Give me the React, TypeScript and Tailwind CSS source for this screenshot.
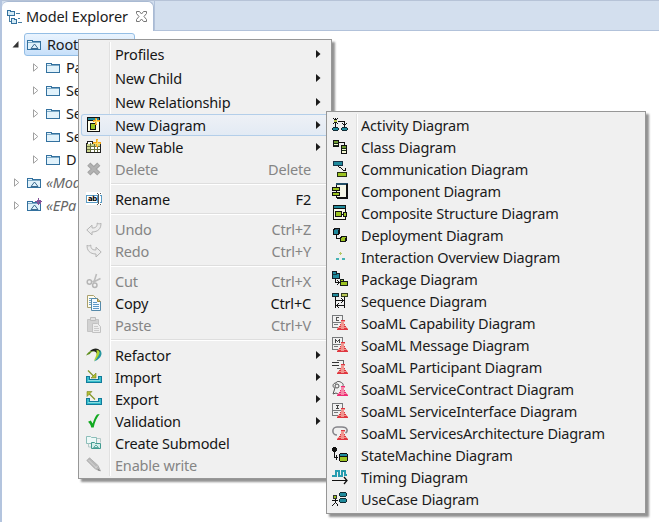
import type { ReactNode } from "react";

function Svg({ children, crisp = true, className = "" }: { children: ReactNode; crisp?: boolean; className?: string }) {
  return (
    <svg
      viewBox="0 0 16 16"
      width="16"
      height="16"
      fill="none"
      className={`block shrink-0 ${className}`}
      shapeRendering={crisp ? "crispEdges" : "auto"}
    >
      {children}
    </svg>
  );
}

const TEAL = "#1f8a9c";
const LIME = "#9cc321";

/* ---------- main menu icons ---------- */

const NewDiagramIcon = () => (
  <Svg>
    <path d="M1.5 .5h12v14h-12z" fill="#fffde8" stroke="#111" />
    <path d="M2 1h11v2H2z" fill={TEAL} />
    <path d="M2 3.500h11M13 3v12M2 14h12" stroke="#111" />
    <path d="M4.500 6.500h5v6h-5z" fill={LIME} stroke="#111" />
    <path d="M9 1h2v2h3v2h-3v3H9V5H7V3h2z" fill="#f09a1c" />
    <path d="M10 2v5M8 4h5" stroke="#ffdc5a" />
  </Svg>
);

const NewTableIcon = () => (
  <Svg>
    <path d="M.5 4.500h1v-2h5v2h8v9H.5z" fill="#fff" stroke="#222" />
    <path d="M1 5h13v2H1zM1 7h3v6H1z" fill="#c9d389" />
    <path d="M1 7.500h13M1 10.500h13M4.500 4v9M8.500 4v9M11.500 7v6" stroke="#6a7040" />
    <path d="M10 0h2v3h3v2h-3v3h-2V5H7V3h3z" fill="#f2a51c" />
    <path d="M11 1v6M8 4h6" stroke="#ffdc5a" />
  </Svg>
);

const DeleteIcon = () => (
  <Svg crisp={false}>
    <path d="M2.800 3.200l10 9.600M12.800 3.200l-10 9.600" stroke="#a2a2a2" strokeWidth="4.600" />
    <path d="M3.200 3.600l9.200 8.800M12.400 3.600l-9.200 8.800" stroke="#b2b2b2" strokeWidth="2.600" />
  </Svg>
);

const RenameIcon = () => (
  <span className="relative block h-4 w-4 shrink-0">
    <Svg>
      <path d="M0 1h16v13H0z" fill="#fff" />
      <path d="M0.500 4.500h11v7h-11zM14 4.500h1.500v7H14" stroke="#5a9bc4" />
      <path d="M11 2.500h1M14 2.500h1M11 13.500h1M14 13.500h1M12.500 3v10" stroke="#555" />
    </Svg>
    <span className="absolute top-[4px] left-[2px] font-['DejaVu_Sans'] text-[7px] leading-[8px] font-bold tracking-[-0.5px] text-black">ab</span>
  </span>
);

const TurnIcon = ({ flip = false }: { flip?: boolean }) => (
  <Svg crisp={false} className={flip ? "-scale-x-100" : ""}>
    <path
      d="M.8 9L6 4.200v2.700c3 .4 5.500-1 5.200-4.900 1 1.200 3.500 1 3.700 0 .5 5.500-3 9-8.900 9v3z"
      fill="#ececec"
      stroke="#b4b4b4"
    />
  </Svg>
);

const CutIcon = () => (
  <Svg crisp={false}>
    <path d="M10.500 1L8.300 8l-2 .7M14.500 5.500L7 9.200" stroke="#bcbcbc" strokeWidth="1.600" />
    <circle cx="3.400" cy="9" r="2.200" stroke="#b5b5b5" strokeWidth="1.500" />
    <circle cx="8.800" cy="12.200" r="2.200" stroke="#b5b5b5" strokeWidth="1.500" />
  </Svg>
);

const CopyIcon = () => (
  <Svg crisp={false}>
    <path d="M1.500.5h6l2 2v10h-8z" fill="#fffdf0" stroke="#aaa06c" />
    <path d="M3 3.500h4M3 5.500h2M3 7.500h2M3 9.500h2" stroke="#6b9fc8" />
    <path d="M5.500 3.500h6l3 3v9h-9z" fill="#f3f9ff" stroke="#568aaa" />
    <path d="M11.500 3.500v3h3" fill="#e0c470" stroke="#9c8b47" />
    <path d="M7 7.500h4M7 9.500h6M7 11.500h6M7 13.500h6" stroke="#5c98c7" />
  </Svg>
);

const PasteIcon = () => (
  <Svg crisp={false}>
    <path d="M1.500 2.500h11v12h-11z" fill="#d2d2d2" stroke="#c4c4c4" />
    <path d="M4.500.5h5v3h-5z" fill="#e1e1e1" stroke="#bcbcbc" />
    <path d="M6.500 6.500h5l3 3v6h-8z" fill="#eee" stroke="#c2c2c2" />
    <path d="M8 9.500h4M8 11.500h5M8 13.500h5" stroke="#cacaca" />
  </Svg>
);

const RefactorIcon = () => (
  <Svg crisp={false}>
    <path d="M0 8.500C2 4.500 6 2.500 10 4c-3.500.1-5.200 1-6.200 3z" fill="#5f8f1f" />
    <path d="M4 4c3-3.500 9-3.500 10.500.5L11 8c0-3.500-2.500-4.500-7-4z" fill="#20231d" />
    <path d="M10.500 3c5 0 4.500 6-2.300 11 .3-3 3.300-5.400 2.300-11z" fill="#b0d52c" />
    <path d="M14 3c4 4.300-.6 9.800-6 11.500 3.600-3.600 5.800-7 6-11.500z" fill="#2596a1" />
  </Svg>
);

const ImportIcon = ({ exporting = false }: { exporting?: boolean }) => (
  <Svg>
    <path d="M.5 7.500h3v3h9v-3h3v6H.5z" fill="#35bdcb" stroke="#117b9b" />
    <path d="M2 11.500h12" stroke="#8bdce1" />
    <g shapeRendering="auto">
      <path d="M2 1.500l7 7" stroke="#83962a" strokeWidth="1.300" />
      {exporting ? (
        <path d="M1 .5h5l-5 5z" fill="#b3be31" stroke="#748523" strokeWidth=".6" />
      ) : (
        <path d="M10 4v5H5z" fill="#b3be31" stroke="#748523" strokeWidth=".6" />
      )}
    </g>
  </Svg>
);

const CheckIcon = () => (
  <Svg crisp={false}>
    <path d="M2 8.800l2.800-1.300 1.900 3C8 6.500 9.500 3 11 1.500l2.700-.5c-3 3.800-4.800 8-6 13.500H5.200c-.4-2.200-1.600-4.200-3.200-5.700z" fill="#11a920" />
  </Svg>
);

const SubmodelIcon = () => (
  <Svg crisp={false}>
    <path d="M.5 1.500h4l1 1h5v6h-10z" fill="#edf8f7" stroke="#8bbeb9" />
    <path d="M2.500 8.500v3.500h3M11 3.500h3.500v4" stroke="#b4c9c7" />
    <path d="M5.500 7.500h3l1 1h5v5h-9z" fill="#d5eeea" stroke="#439b90" />
    <path d="M7.500 12.500l2.500-2.500 2.500 2.500z" stroke="#439b90" strokeWidth=".8" />
  </Svg>
);

const PencilIcon = () => (
  <Svg crisp={false}>
    <path d="M.8 3.500L3.500.8l8.500 7.700L14.500 14 9 11.700z" fill="#b9b9b9" stroke="#a9a9a9" strokeWidth=".8" />
    <path d="M2.500 3l8 8M9 11.500l3-3" stroke="#d7d7d7" />
    <path d="M12 12l2.500 2-2.800-.7z" fill="#777" />
  </Svg>
);

/* ---------- diagram icons ---------- */

const ActivityIcon = () => (
  <Svg>
    <path d="M1 1.500h1M5 1.500h1M2 2.500h1M4 2.500h1M2 5.500h1M4 5.500h1M1 6.500h1M5 6.500h1M3.500 1v9M6 4.500h6.500V10M10 6.500h1M14 6.500h1M11 7.500h3M12 8.500h1" stroke="#111" />
    <path d="M2 3h3v2H2z" fill="#bac84f" />
    <path d="M1 10h5v1h1v2H6v1H1v-1H0v-2h1zM10 10h5v1h1v2h-1v1h-5v-1H9v-2h1z" fill="#112b34" />
    <path d="M1 11h5v2H1zM10 11h5v2h-5z" fill={TEAL} />
  </Svg>
);

const ClassIcon = () => (
  <Svg>
    <path d="M6 3.500h6.500V6" stroke="#111" />
    <path d="M1.500 1.500h5v6h-5zM9.500 6.500h5v8h-5z" fill="#f4f4d0" stroke="#111" />
    <path d="M2 2h4v2H2zM10 7h4v2h-4z" fill="#6f9b32" />
    <path d="M2 4.500h4M2 6.500h4M10 9.500h4M10 11.500h4" stroke="#172d15" />
  </Svg>
);

const CommunicationIcon = () => (
  <Svg>
    <path d="M1.500 0.500h9v4h-9z" fill={TEAL} stroke="#173447" />
    <path d="M5.500 11.500h9v4h-9z" fill={LIME} stroke="#252f15" />
    <path d="M6 5.500h1M7 6.500h2M9 7.500h1M10 8.500h1M11 9.500h3M13.500 7v3" stroke="#111" />
  </Svg>
);

const ComponentIcon = () => (
  <Svg>
    <path d="M4.500 1.500h10v13h-10z" fill="#f6f6e8" stroke="#111" />
    <path d="M4 0h12v2H4z" fill="#244e67" />
    <path d="M14 1h2v15h-2zM5 14h10v2H5z" fill="#111" />
    <path d="M.5 4.500h7v3h-7zM.5 9.500h7v3h-7z" fill={LIME} stroke="#111" />
  </Svg>
);

const CompositeIcon = () => (
  <Svg>
    <path d="M1.500 .5h12v14h-12z" fill="#f8f7e9" stroke="#111" />
    <path d="M2 1h11v2H2z" fill={TEAL} />
    <path d="M2 3.500h12M2 14h12" stroke="#111" />
    <path d="M3.500 6.500h6v5h-6z" fill={LIME} stroke="#111" />
    <path d="M9 9.500h2" stroke="#111" />
    <path d="M11.500 7.500h3v4h-3z" fill={LIME} stroke="#111" />
  </Svg>
);

const DeploymentIcon = () => (
  <Svg>
    <path d="M1 2h1V1h6v6H7v1H1zM8 10h1V9h6v5h-1v1H8z" fill="#111" />
    <path d="M2 3h4v4H2z" fill={TEAL} />
    <path d="M3 2h4v1H3z" fill="#315c75" />
    <path d="M9 11h4v3H9zM10 10h4v1h-4z" fill={LIME} />
    <path d="M4.500 8v3.500H8" stroke="#111" />
  </Svg>
);

const InteractionIcon = () => (
  <Svg>
    <path d="M7 4.500h3M8.500 3v3" stroke="#b4c765" />
    <path d="M4 9h3v2H4zM10 9h3v2h-3z" fill="#46b3b4" />
  </Svg>
);

const PackageIcon = () => (
  <Svg>
    <path d="M.5 .5h4v2h3v5h-7z" fill={TEAL} stroke="#151e27" />
    <path d="M1 3.500h4" stroke="#153845" />
    <path d="M8.500 8.500h3v2h4v4h-7z" fill={LIME} stroke="#151e17" />
    <path d="M9 10.500h3M3.500 8v4M4 11.500h4M6 10.500h1M6 12.500h1M5 9.500h1M5 13.500h1" stroke="#111" />
  </Svg>
);

const SequenceIcon = () => (
  <Svg>
    <path d="M.5 .5h6v3h-6z" fill={TEAL} stroke="#17282d" />
    <path d="M9.500 .5h6v3h-6z" fill="#bac957" stroke="#333d1e" />
    <path d="M3.500 4v11M12.500 4v11M4 7.500h8M10 6.500h1M10 8.500h1M9 5.500h1M9 9.500h1M4 12.500h8M5 11.500h1M5 13.500h1M6 10.500h1M6 14.500h1" stroke="#111" />
  </Svg>
);

type SoaKind = "C" | "M" | "P" | "G" | "I" | "A";
const SoaIcon = ({ kind }: { kind: SoaKind }) => (
  <Svg>
    {(kind === "C" || kind === "M" || kind === "I") && (
      <>
        <path d="M.5.5h10v7H.5zM.5 7v5H6M2 9.500h4" stroke="#77797b" />
        {kind === "C" && <path d="M7 2.500H4.500v3H7" stroke="#555" />}
        {kind === "M" && <path d="M3.500 6V2M4 3.500h1M5 4.500h1M6 3.500h1M7.500 2v4" stroke="#444" />}
        {kind === "I" && <path d="M4 2.500h3M4 5.500h3M5.500 3v3" stroke="#444" />}
      </>
    )}
    {kind === "P" && (
      <>
        <path d="M4.500 1.500h7v8h-7" stroke="#666" />
        <path d="M0 3.500h7M0 6.500h7" stroke="#333" />
      </>
    )}
    {kind === "G" && (
      <g shapeRendering="auto" stroke="#555">
        <path d="M4 2c1-3 5-1 6 0 2 1 1 3 0 5M4 2C0 2 .5 7 3 7l-2 6 3-1 2 1" />
        <circle cx="5" cy="5" r="2" />
      </g>
    )}
    {kind === "A" && <path d="M5 10C-.5 10-.5 2 5 2h5c6 0 6 4.500 3.500 6" stroke="#85858a" strokeWidth="1.600" shapeRendering="auto" />}
    <path d="M9 5h4v2h-1v2h1v2h1v1h1v1h1v2H5v-2h1v-1h1v-1h1V9h1V7H9z" fill={kind === "G" ? "#f48aa8" : "#f0958f"} />
    <path d="M5 14.500h11M9 5.500h4M8 9.500h1M12 9.500h1M7 11.500h2M12 11.500h2M6 13.500h3M12 13.500h3" stroke={kind === "G" ? "#ee2c74" : "#df3740"} />
  </Svg>
);

const StateIcon = () => (
  <Svg>
    <path d="M1 0h3v1h1v3H4v1H1V4H0V1h1z" fill="#111" />
    <path d="M2.500 5v5.500H6M4.500 8v5" stroke="#111" />
    <path d="M8 6h7v1h1v7h-1v1H8v-1H7V7h1z" fill="#111" />
    <path d="M8 7h7v2H8z" fill={TEAL} />
    <path d="M8 10h7v4H8z" fill={LIME} />
  </Svg>
);

const TimingIcon = () => (
  <Svg>
    <path d="M0 7h4V2h3v5h3V2h3v4h2" stroke="#279caf" strokeWidth="2" />
    <path d="M0 11.500h15" stroke="#111" />
    <path d="M12 8l3 3.500-3 3.500" stroke="#111" strokeWidth="1.300" shapeRendering="auto" />
  </Svg>
);

const UseCaseIcon = () => (
  <Svg>
    <path d="M1.500 4.500h3v3h-3z" fill={LIME} stroke="#333" />
    <path d="M3.500 8v4M0 9.500h6M2 12.500h1M1 13.500h1M0 14.500h1M4 12.500h1M5 13.500h1M5 14.500h1" stroke="#111" />
    <path d="M8 1h6v1h1v3h-1v1H8V5H7V2h1zM8 7h6v1h1v3h-1v1H8v-1H7V8h1z" fill="#102c32" />
    <path d="M8 2h6v3H8zM8 8h6v3H8z" fill={TEAL} />
  </Svg>
);

/* ---------- explorer icons ---------- */

const Folder = ({ model = false, profile = false }: { model?: boolean; profile?: boolean }) => (
  <Svg>
    <path d="M1.500 3.500h5v1h8v8h-13z" fill="#e1f2fb" stroke="#33719f" />
    <path d="M2 5.500h12" stroke="#7eaac6" />
    {model && <path d="M5 11.500L8.500 7l3.500 4.500z" stroke="#3c6a90" shapeRendering="auto" />}
    {profile && <path d="M12.500 0v7M9 3.500h7M11 2h3v3h-3z" stroke="#85539a" />}
  </Svg>
);

const ExplorerIcon = () => (
  <Svg>
    <path d="M.5 1.500h3v1h4v4h-7zM4.500 9.500h3v1h2v4h-5z" fill="#d3eaf5" stroke="#33719f" />
    <path d="M2.500 7v5.500H4M9 4.500h4M11 9.500h2M11 13.500h4" stroke="#4a7fa3" />
  </Svg>
);

const Expander = ({ open = false }: { open?: boolean }) => (
  <svg width="7" height="9" viewBox="0 0 7 9" className="block shrink-0">
    {open ? <path d="M6.500 1v6.500H.5z" fill="#333" /> : <path d="M1.500 .8L5.800 4.500 1.500 8.200z" fill="#fff" stroke="#a0a0a0" />}
  </svg>
);

/* ---------- menus ---------- */

type Item = { label: string; icon?: ReactNode; keys?: string; sub?: boolean; off?: boolean; tall?: boolean; hot?: boolean };

const groups: Item[][] = [
  [
    { label: "Profiles", sub: true, tall: true },
    { label: "New Child", sub: true, tall: true },
    { label: "New Relationship", sub: true, tall: true },
    { label: "New Diagram", icon: <NewDiagramIcon />, sub: true, hot: true },
    { label: "New Table", icon: <NewTableIcon />, sub: true },
    { label: "Delete", icon: <DeleteIcon />, keys: "Delete", off: true },
  ],
  [{ label: "Rename", icon: <RenameIcon />, keys: "F2" }],
  [
    { label: "Undo", icon: <TurnIcon />, keys: "Ctrl+Z", off: true },
    { label: "Redo", icon: <TurnIcon flip />, keys: "Ctrl+Y", off: true },
  ],
  [
    { label: "Cut", icon: <CutIcon />, keys: "Ctrl+X", off: true },
    { label: "Copy", icon: <CopyIcon />, keys: "Ctrl+C" },
    { label: "Paste", icon: <PasteIcon />, keys: "Ctrl+V", off: true },
  ],
  [
    { label: "Refactor", icon: <RefactorIcon />, sub: true },
    { label: "Import", icon: <ImportIcon />, sub: true },
    { label: "Export", icon: <ImportIcon exporting />, sub: true },
    { label: "Validation", icon: <CheckIcon />, sub: true },
    { label: "Create Submodel", icon: <SubmodelIcon /> },
    { label: "Enable write", icon: <PencilIcon />, off: true },
  ],
];

const diagrams: [string, ReactNode][] = [
  ["Activity Diagram", <ActivityIcon />],
  ["Class Diagram", <ClassIcon />],
  ["Communication Diagram", <CommunicationIcon />],
  ["Component Diagram", <ComponentIcon />],
  ["Composite Structure Diagram", <CompositeIcon />],
  ["Deployment Diagram", <DeploymentIcon />],
  ["Interaction Overview Diagram", <InteractionIcon />],
  ["Package Diagram", <PackageIcon />],
  ["Sequence Diagram", <SequenceIcon />],
  ["SoaML Capability Diagram", <SoaIcon kind="C" />],
  ["SoaML Message Diagram", <SoaIcon kind="M" />],
  ["SoaML Participant Diagram", <SoaIcon kind="P" />],
  ["SoaML ServiceContract Diagram", <SoaIcon kind="G" />],
  ["SoaML ServiceInterface Diagram", <SoaIcon kind="I" />],
  ["SoaML ServicesArchitecture Diagram", <SoaIcon kind="A" />],
  ["StateMachine Diagram", <StateIcon />],
  ["Timing Diagram", <TimingIcon />],
  ["UseCase Diagram", <UseCaseIcon />],
];

function MenuRow({ item }: { item: Item }) {
  return (
    <div
      className={`flex items-center pl-[5px] ${item.tall ? "h-6" : "h-[22px]"} ${item.off ? "text-[#858585]" : "text-[#161616]"} ${
        item.hot ? "rounded-[3px] bg-linear-to-b from-[#eef1f6] to-[#e2eaf4] shadow-[inset_0_0_0_1px_#b3cee9]" : ""
      }`}
    >
      <span className="w-[29px] shrink-0">{item.icon}</span>
      <span className="grow py-px leading-[20px]">{item.label}</span>
      {item.keys && <span className="mr-[18px] py-px leading-[20px]">{item.keys}</span>}
      {item.sub && (
        <svg width="5" height="8" viewBox="0 0 5 8" className="mr-[8px] block">
          <path d="M0 0l4.500 4L0 8z" fill="#1a1a1a" />
        </svg>
      )}
    </div>
  );
}

const treeRows = ["Pa", "Se", "Se", "Se", "D"];

export default function App() {
  return (
    <div className="relative h-[522px] w-[659px] overflow-hidden bg-white font-['Noto_Sans','Open_Sans',sans-serif] text-[14.5px] tracking-[-0.19px] whitespace-nowrap text-[#1b1b1b]">
      <div className="flex h-full flex-col border-l-2 border-[#b3c4de]">
        <div className="flex h-[31px] border-t border-[#b6c3d7] bg-[#d3dfee]">
          <div className="flex h-[30px] w-[152px] items-center rounded-t-[6px] border-t border-r border-[#a9bad3] bg-white pl-[5px]">
            <ExplorerIcon />
            <span className="ml-[3px] pt-px tracking-[-0.12px]">Model Explorer</span>
            <svg width="11" height="11" viewBox="0 0 11 11" className="ml-[8px] block shrink-0">
              <path d="M.5.5h3l2 2.500 2-2.500h3v2L8 5.500l2.500 3v2h-3l-2-2.500-2 2.500h-3v-2l2.500-3-2.500-3z" fill="#fff" stroke="#777" />
            </svg>
          </div>
          <div className="grow border-b border-l border-[#b2c2da]" />
        </div>
        <div className="flex flex-col pt-[2px] pl-[10px]">
          <div className="flex h-[23px] items-center">
            <Expander open />
            <div className="ml-[5px] flex h-[23px] w-[111px] items-center rounded-[3px] border border-[#94bee5] bg-linear-to-b from-[#eaf4fe] to-[#c7e0fa] pl-px">
              <Folder model />
              <span className="ml-[5px]">Root</span>
            </div>
          </div>
          {treeRows.map((name, i) => (
            <div key={i} className="flex h-[23px] items-center pl-[20px]">
              <Expander />
              <span className="ml-[6px]"><Folder /></span>
              <span className="ml-[5px]">{name}</span>
            </div>
          ))}
          <div className="flex h-[23px] items-center pl-px text-[#666] italic">
            <Expander />
            <span className="mr-[4px] ml-[6px]"><Folder model /></span>
            «Mod
          </div>
          <div className="flex h-[23px] items-center pl-px text-[#666] italic">
            <Expander />
            <span className="mr-[4px] ml-[6px]"><Folder model profile /></span>
            «EPa
          </div>
        </div>
      </div>

      <div className="absolute top-[39px] left-[78px] h-[440px] w-[254px] border border-[#979797] bg-[#f0f0f0] p-[2px] shadow-[3px_3px_2px_#929292]">
        <div className="h-full bg-[linear-gradient(90deg,transparent_28px,#e1e1e1_28px,#e1e1e1_29px,#fff_29px,#fff_30px,transparent_30px)]">
          {groups.map((group, i) => (
            <div key={i}>
              {i > 0 && (
                <div className="flex h-2 flex-col justify-center pl-[30px]">
                  <div className="h-[2px] border-t border-[#dedede] bg-white" />
                </div>
              )}
              {group.map((item) => <MenuRow key={item.label} item={item} />)}
            </div>
          ))}
        </div>
      </div>

      <div className="absolute top-[111px] left-[326px] h-[403px] w-[320px] border border-[#979797] bg-[#f0f0f0] p-[2px] shadow-[3px_3px_2px_#929292]">
        <div className="h-full bg-[linear-gradient(90deg,transparent_27px,#e1e1e1_27px,#e1e1e1_28px,#fff_28px,#fff_29px,transparent_29px)]">
          {diagrams.map(([label, icon]) => (
            <div key={label} className="flex h-[22px] items-center pl-[3px]">
              <span className="w-[29px] shrink-0">{icon}</span>
              <span className="py-px leading-[20px]">{label}</span>
            </div>
          ))}
        </div>
      </div>
    </div>
  );
}
